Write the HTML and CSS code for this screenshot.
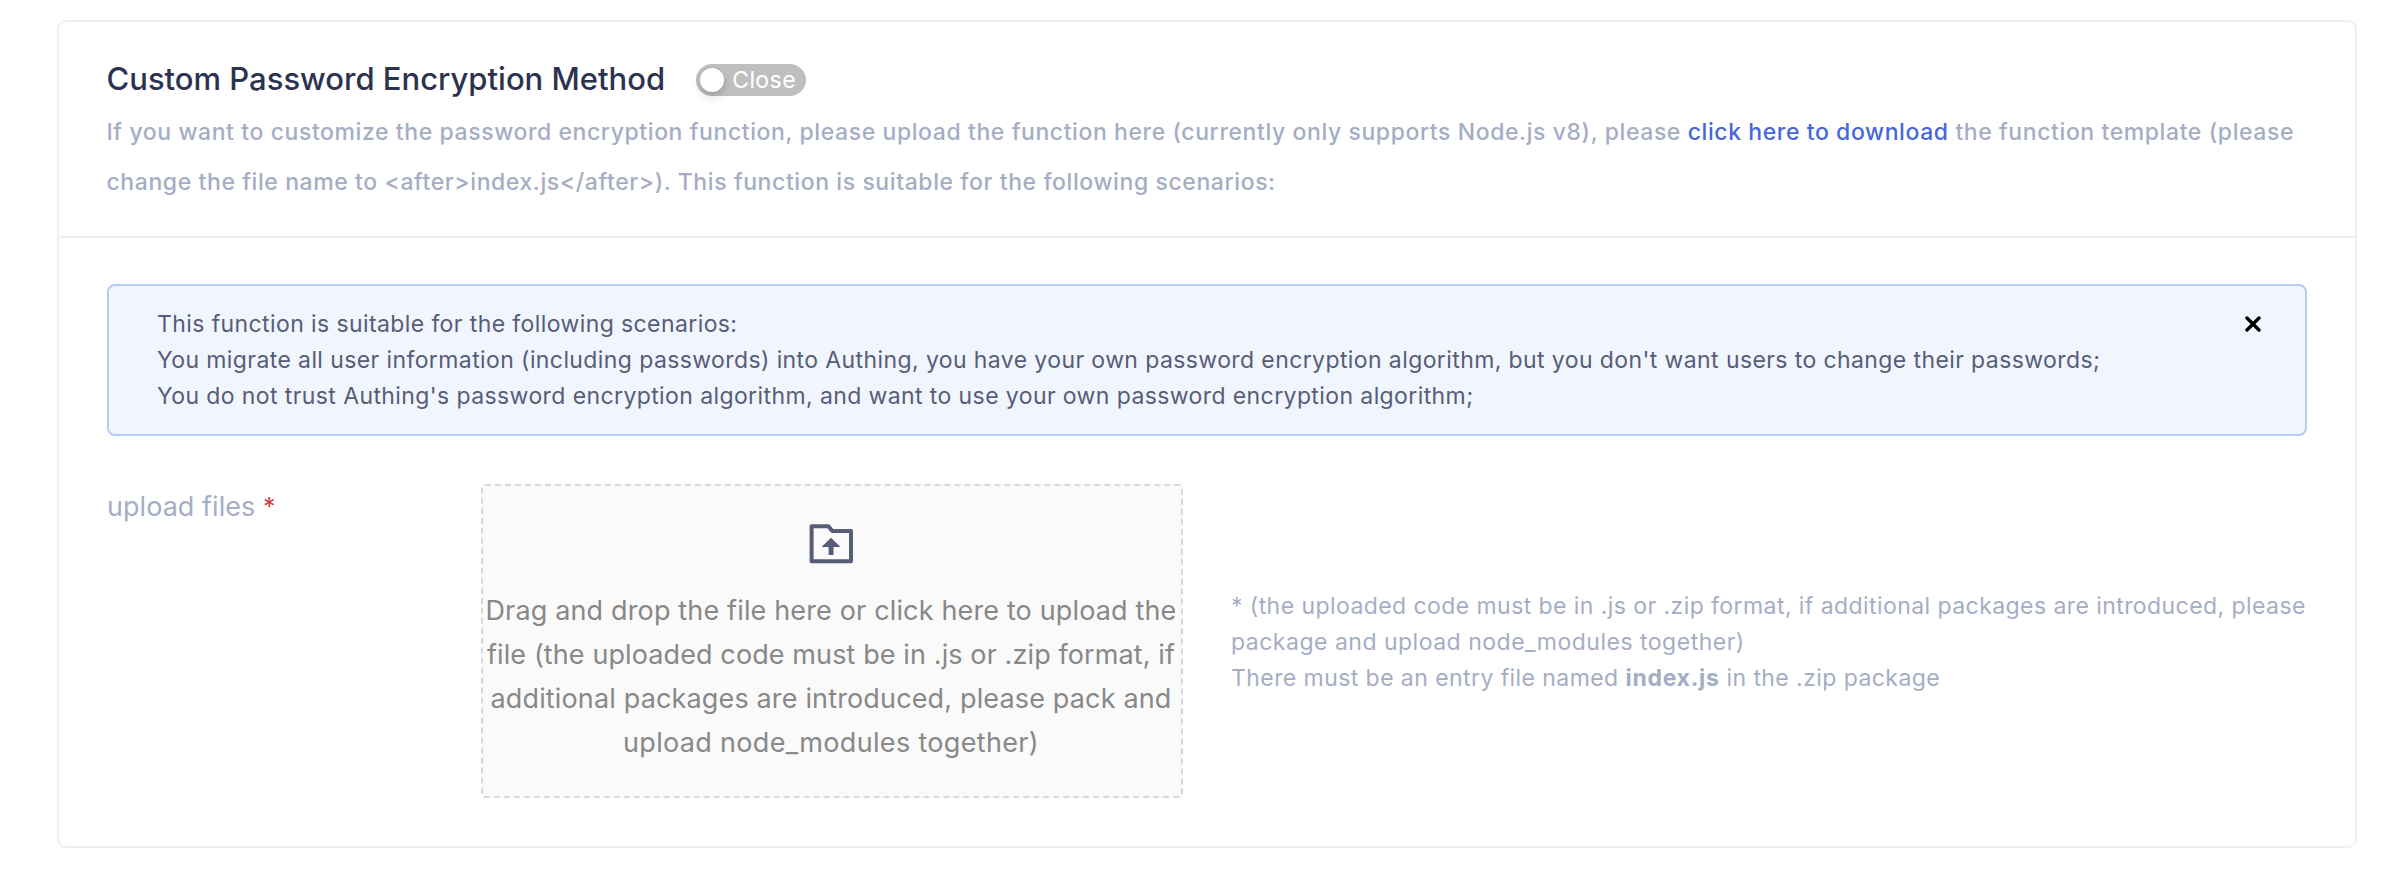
FILE: index.html
```
<!DOCTYPE html>
<html lang="en">
<head>
<meta charset="utf-8">
<title>Custom Password Encryption Method</title>
<link rel="stylesheet" href="styles.css">
</head>
<body>
<section class="card">
  <header class="card-head">
    <div class="title-row">
      <h1 class="title">Custom Password Encryption Method</h1>
      <button class="switch" type="button" role="switch" aria-checked="false"><span class="knob"></span><span class="switch-text">Close</span></button>
    </div>
    <p class="desc">If you want to customize the password encryption function, please upload the function here (currently only supports Node.js v8), please <a class="link">click here to download</a> the function template (please<br>change the file name to &lt;after&gt;index.js&lt;/after&gt;). This function is suitable for the following scenarios:</p>
  </header>
  <div class="card-body">
    <div class="alert">
      <p class="alert-text">This function is suitable for the following scenarios:<br>You migrate all user information (including passwords) into Authing, you have your own password encryption algorithm, but you don't want users to change their passwords;<br>You do not trust Authing's password encryption algorithm, and want to use your own password encryption algorithm;</p>
      <svg class="close" width="16" height="16" viewBox="0 0 16 16"><path d="M2 2L14 14M14 2L2 14"/></svg>
    </div>
    <div class="form-row">
      <div class="label">upload files <span class="required">*</span></div>
      <div class="dropzone">
        <svg class="folder" width="48" height="44" viewBox="0 0 48 44">
          <path class="folder-line" d="M3.6 4.3H20.4L24.3 9H43V39.3H3.6Z"/>
          <path class="folder-arrow" d="M23 15.7L32.5 24.9H25.5V33H20.6V24.9H13.5Z"/>
        </svg>
        <p class="drop-text">Drag and drop the file here or click here to upload the<br><span class="tight">file (the uploaded code must be in .js or .zip format, if</span><br>additional packages are introduced, please pack and<br><span class="loose">upload node_modules together)</span></p>
      </div>
      <p class="note">* (the uploaded code must be in .js or .zip format, if additional packages are introduced, please<br><span class="note-wide">package and upload node_modules together)</span><br>There must be an entry file named <b>index.js</b> in the .zip package</p>
    </div>
  </div>
</section>
</body>
</html>
```
FILE: styles.css
```
* { box-sizing: border-box; }
body {
  margin: 0;
  padding: 20px 48px 22px 57px;
  background: #fff;
  font-family: Inter, "Liberation Sans", sans-serif;
}
p, h1 { margin: 0; white-space: nowrap; }
.card { border: 2px solid #f0f0f0; border-radius: 9px; background: #fff; }
.card-head { padding: 36px 47px 29px 47.5px; border-bottom: 2px solid #f0f0f0; }
.title-row { display: flex; align-items: flex-start; gap: 31px; margin-bottom: 7px; }
.title {
  font-size: 31px;
  font-weight: 500;
  line-height: 42px;
  color: #2b3350;
}
.switch {
  display: flex;
  align-items: center;
  width: 110px;
  height: 32px;
  margin-top: 6px;
  padding: 0 0 0 4px;
  border: 0;
  border-radius: 16px;
  background: #bfbfbf;
  color: #fff;
  font-family: inherit;
}
.knob {
  width: 24px;
  height: 24px;
  border-radius: 50%;
  background: #fff;
  box-shadow: 0 4px 8px rgba(0, 35, 11, 0.2);
}
.switch-text { margin-left: 8px; font-size: 23px; line-height: 32px; letter-spacing: 0.42px; }
.desc {
  font-size: 23px;
  font-weight: 500;
  line-height: 50px;
  letter-spacing: 0.588px;
  color: #a5adc5;
}
.link { color: #4766de; }
.card-body { padding: 46px 48px 48px; }
.alert {
  display: flex;
  justify-content: space-between;
  padding: 20px 44px 20px 48px;
  border: 2px solid #b8cbf1;
  border-radius: 8px;
  background: #f1f5fe;
}
.alert-text { font-size: 23px; line-height: 36px; letter-spacing: 0.4px; color: #575d78; }
.close { margin-top: 10px; fill: none; stroke: #000; stroke-width: 3.4; stroke-linecap: round; }
.form-row { display: flex; margin-top: 48px; }
.label {
  width: 374px;
  padding-top: 1px;
  font-size: 27px;
  line-height: 44px;
  letter-spacing: 0.04px;
  color: #a5adc5;
}
.required { font-size: 25px; color: #cf4545; }
.dropzone {
  width: 702px;
  height: 314px;
  padding-top: 36px;
  border: 2px dashed #d9d9d9;
  border-radius: 4px;
  background: #fafafa;
  text-align: center;
}
.folder { display: block; margin: 0 auto 23px; }
.folder-line { fill: none; stroke: #575d78; stroke-width: 4; stroke-linejoin: round; }
.folder-arrow { fill: #575d78; }
.drop-text { padding-right: 2px; font-size: 27px; line-height: 44px; letter-spacing: 0.15px; color: #888; }
.tight { letter-spacing: 0.104px; }
.loose { letter-spacing: 0.33px; }
.note {
  align-self: center;
  margin-left: 48px;
  padding-top: 2px;
  font-size: 23px;
  line-height: 36px;
  letter-spacing: 0.43px;
  color: #a5adc5;
}
.note-wide { letter-spacing: 0.5px; }
.note b { font-weight: 700; letter-spacing: 0.7px; }
```
